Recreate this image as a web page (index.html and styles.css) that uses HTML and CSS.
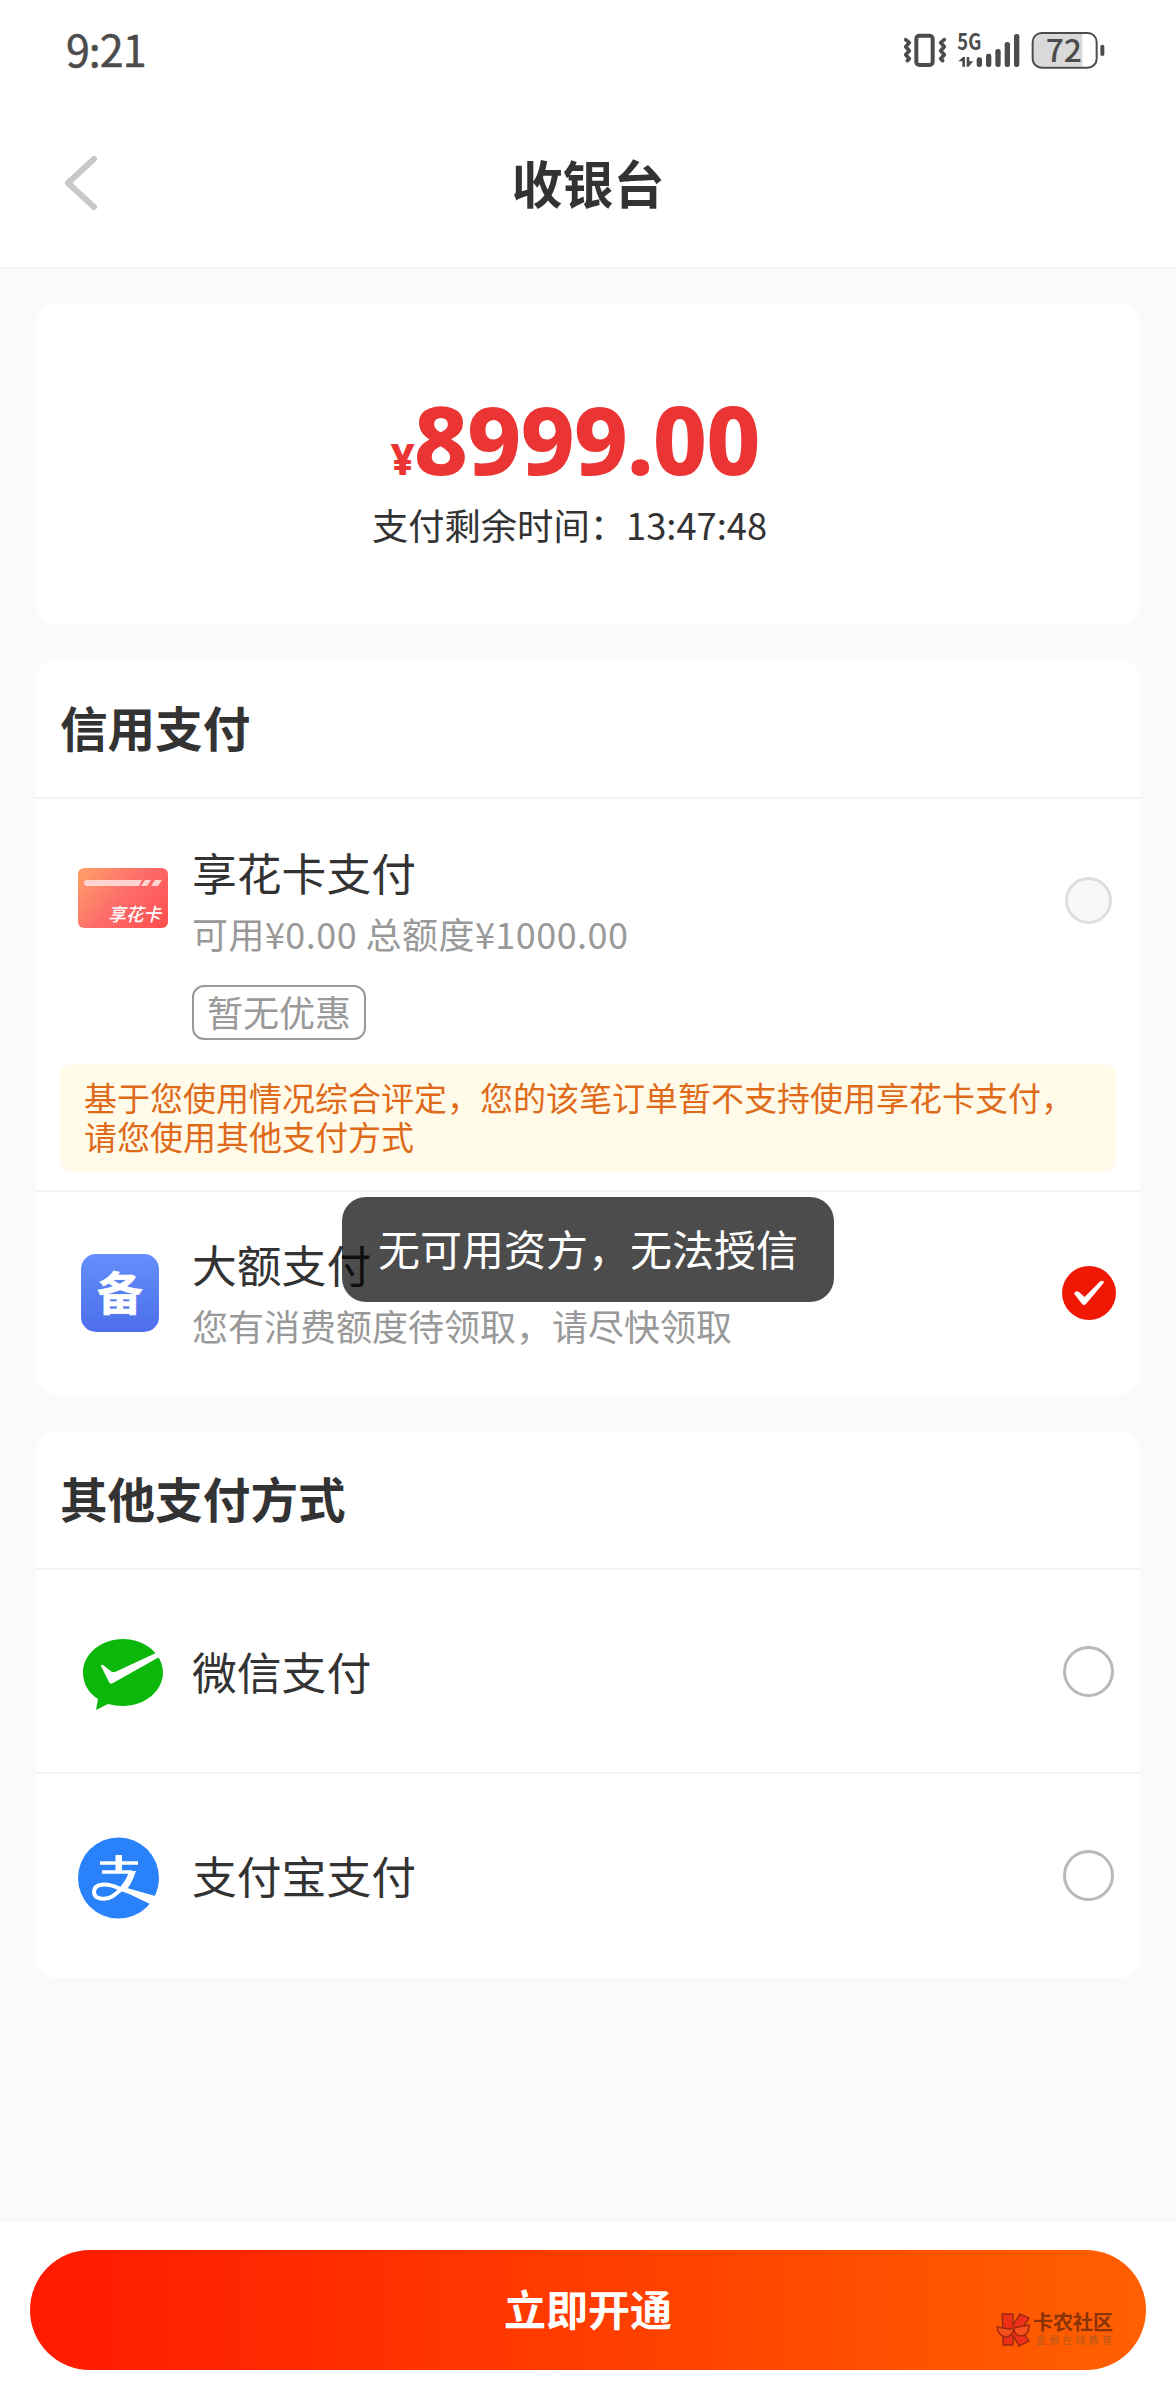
FILE: index.html
```html
<!DOCTYPE html>
<html lang="zh-CN">
<head>
<meta charset="utf-8">
<title>收银台</title>
<link rel="stylesheet" href="styles.css">
</head>
<body>
<div class="page">
  <header class="top">
    <div class="status">
      <span class="clock">9:21</span>
      <svg class="status-icons" viewBox="130 24 615 186" fill="#4c4c4c">
        <g fill="none" stroke="#4c4c4c">
          <rect x="170" y="74" width="49" height="88" rx="9" stroke-width="12"/>
          <path d="M138 86l11 9-11 12 11 12-11 12 11 12-6 6M254 86l-11 9 11 12-11 12 11 12-11 12 6 6" stroke-width="11" stroke-linecap="round" stroke-linejoin="round"/>
        </g>
        <text x="293" y="117" class="net" textLength="72" lengthAdjust="spacingAndGlyphs">5G</text>
        <path d="M296 151l14-13h6v29h-8v-16zM341 151l-14 16h-6v-29h8v13z"/>
        <rect x="351" y="139" width="16" height="29" rx="7"/>
        <rect x="379" y="128" width="16" height="40" rx="7"/>
        <rect x="407" y="114" width="16" height="54" rx="7"/>
        <rect x="435" y="93" width="16" height="75" rx="7"/>
        <rect x="463" y="69" width="16" height="99" rx="7"/>
        <path d="M544 69h124v98H544q-23 0-23-24V93q0-24 23-24z" fill="#d9d9d9"/>
        <rect x="519" y="66" width="192" height="104" rx="27" fill="none" stroke="#4c4c4c" stroke-width="6"/>
        <text x="558" y="153" class="pct" textLength="109" lengthAdjust="spacingAndGlyphs">72</text>
        <rect x="722" y="101" width="12" height="34" rx="6"/>
      </svg>
    </div>
    <div class="nav">
      <svg class="back" viewBox="0 0 34 56"><path d="M30 4L4 28l26 24" fill="none" stroke="#c8c8c8" stroke-width="6" stroke-linecap="round" stroke-linejoin="round"/></svg>
      <h1>收银台</h1>
    </div>
  </header>

  <main class="content">
    <section class="card summary">
      <p class="amount"><span class="yen">¥</span>8999.00</p>
      <p class="remain">支付剩余时间：13:47:48</p>
    </section>

    <section class="card">
      <h2>信用支付</h2>
      <div class="item item-flower">
        <div class="row">
          <svg class="icon" viewBox="0 0 100 100">
            <defs>
              <linearGradient id="coral" x1="0" y1="0.2" x2="1" y2="0.8"><stop offset="0" stop-color="#ff9a68"/><stop offset="0.5" stop-color="#fd6b6b"/><stop offset="1" stop-color="#fd5151"/></linearGradient>
            </defs>
            <rect x="6" y="20" width="90" height="60" rx="6" fill="url(#coral)"/>
            <path d="M15 32h55l-3 6H15a3 3 0 0 1 0-6zM73 32h6l-4 6h-6zM83 32h7l-4 6h-7z" fill="#ffd3cf"/>
            <text x="36" y="73" class="card-mark" textLength="53" lengthAdjust="spacingAndGlyphs">享花卡</text>
          </svg>
          <div class="info">
            <h3>享花卡支付</h3>
            <p class="sub quota">可用¥0.00 总额度¥1000.00</p>
            <span class="tag">暂无优惠</span>
          </div>
          <span class="radio disabled"></span>
        </div>
        <p class="notice">基于您使用情况综合评定，您的该笔订单暂不支持使用享花卡支付，请您使用其他支付方式</p>
      </div>
      <div class="item item-large">
        <div class="row">
          <svg class="icon" viewBox="0 0 100 100">
            <defs><linearGradient id="blue" x1="0" y1="0" x2="0" y2="1"><stop offset="0" stop-color="#648ffb"/><stop offset="1" stop-color="#4c6eea"/></linearGradient></defs>
            <rect x="9" y="11" width="78" height="78" rx="15" fill="url(#blue)"/>
            <text x="48" y="67" class="bei" text-anchor="middle">备</text>
          </svg>
          <div class="info">
            <h3>大额支付</h3>
            <p class="sub">您有消费额度待领取，请尽快领取</p>
          </div>
          <svg class="checked" viewBox="0 0 54 54"><circle cx="27" cy="27" r="27" fill="#f01704"/><path d="M12 27.500q2-3.500 5-1.500l5.500 5L38 15.500q3.500-2 4 1L24 38q-2 2-4 0z" fill="#fff"/></svg>
        </div>
      </div>
    </section>

    <section class="card wallets">
      <h2>其他支付方式</h2>
      <div class="item item-wallet">
        <div class="row">
          <svg class="icon" viewBox="0 0 100 100">
            <path d="M51 15c22 0 40 15 40 33.500S73 82 51 82q-8 0-15-2l-12 6 2-11C16 69 11 59 11 48.500 11 30 29 15 51 15z" fill="#0bb70b"/>
            <path d="M29 42q0-2 2-1l9 7 3 0L86 28l3 4-48 27q-3 2-4-1z" fill="#fff"/>
          </svg>
          <h3>微信支付</h3>
          <span class="radio"></span>
        </div>
      </div>
      <div class="item item-wallet">
        <div class="row">
          <svg class="icon" viewBox="0 0 100 100">
            <circle cx="46.500" cy="50" r="40.500" fill="#2a82fb"/>
            <path d="M28 35h38M30 44h30" fill="none" stroke="#fff" stroke-width="3.500"/>
            <path d="M43.500 27h6.500v17h-6.500z" fill="#fff"/>
            <path d="M60 43c-3 10-10 19-19 25-8 5-19 3-19-4 0-9 13-9 24-4l38 13" fill="none" stroke="#fff" stroke-width="4"/>
            <path d="M55 60l28 8-5 8-29-14z" fill="#fff"/>
            <path d="M57 43h7q-4 12-9 18l-6-3q6-7 8-15z" fill="#fff"/>
          </svg>
          <h3>支付宝支付</h3>
          <span class="radio"></span>
        </div>
      </div>
    </section>
  </main>

  <footer class="bar">
    <div class="submit">立即开通</div>
  </footer>

  <div class="toast">无可用资方，无法授信</div>

  <svg class="watermark" viewBox="0 -6 120 50">
    <g stroke="#a02a10" stroke-width="1.500" fill="#ee2f1a">
      <path d="M6 2h11v11L24 2l9 4-8 12 8 11-10 5-6-11v10H7V17z"/>
      <path d="M1 15l12 2 5-1 4-1 11-2q0 11-8 11-6 0-7-7-2 8-9 8-7-2-8-10z" fill="#f5501e"/>
    </g>
    <text x="37" y="18" class="wm-name" textLength="80" lengthAdjust="spacingAndGlyphs">卡农社区</text>
    <text x="40" y="32" class="wm-sub" textLength="76">金融在线教育</text>
  </svg>
</div>
</body>
</html>
```
FILE: styles.css
```css
* { box-sizing: border-box; margin: 0; padding: 0; }

body {
  font-family: "Noto Sans CJK SC", "Noto Sans", sans-serif;
  color: #333;
  background: #fafafa;
}

.page {
  position: relative;
  display: flex;
  flex-direction: column;
  width: 1176px;
  height: 2400px;
  overflow: hidden;
}

h1, h2, h3, p { white-space: nowrap; }

/* status bar and navigation */
.top { height: 268px; background: #fff; border-bottom: 1px solid #f2f2f2; }
.status {
  display: flex;
  justify-content: space-between;
  align-items: center;
  height: 99px;
  padding: 0 68px 0 66px;
}
.clock { font-size: 43px; font-weight: 400; color: #4c4c4c; line-height: 60px; letter-spacing: -1px; padding-bottom: 3px; -webkit-text-stroke: 0.5px #4c4c4c; }
.status-icons { width: 205px; height: 62px; overflow: visible; }
.net { font: 700 66px "Noto Sans CJK SC", sans-serif; }
.pct { font: 500 93px "Noto Sans CJK SC", sans-serif; }

.nav {
  display: grid;
  grid-template-columns: 1fr auto 1fr;
  align-items: center;
  height: 168px;
  padding: 0 64px;
}
.back { width: 34px; height: 56px; }
h1 { font-size: 51px; line-height: 60px; font-weight: 700; padding-bottom: 3px; }

/* cards */
.content {
  flex: 1;
  display: flex;
  flex-direction: column;
  gap: 36px;
  padding: 35px 36px 0;
}
.card { background: #fff; border-radius: 20px; }
.summary { height: 321px; padding-top: 86px; text-align: center; }
.amount {
  font-family: "Noto Sans", sans-serif;
  font-size: 94px;
  line-height: 100px;
  font-weight: 800;
  letter-spacing: -1px;
  color: #eb3434;
  padding-right: 26px;
}
.yen { font-size: 42px; line-height: 1; }
.remain { margin-top: 10px; font-size: 36.300px; line-height: 50px; padding-right: 37px; }

h2 {
  height: 137px;
  padding-left: 24px;
  font-size: 47.600px;
  line-height: 133px;
  font-weight: 700;
}
.item { border-top: 2px solid #f3f3f3; }
.row { display: flex; align-items: center; padding: 0 24px 0 36px; }
.icon { flex: none; width: 100px; height: 100px; margin-right: 20px; overflow: visible; }
.info { flex: 1; }
h3 { flex: 1; font-size: 44.800px; line-height: 66px; font-weight: 400; padding-bottom: 4px; }
.sub { margin-top: -3px; padding-bottom: 3px; font-size: 36px; line-height: 54px; color: #999; }
.quota { letter-spacing: 0.450px; }
.tag {
  display: block;
  width: 174px;
  height: 55px;
  margin-top: 22px;
  border: 2px solid #999;
  border-radius: 12px;
  color: #999;
  font-size: 36px;
  line-height: 48px;
  text-align: center;
}

.item-flower { height: 393px; }
.item-flower .row { align-items: flex-start; padding-top: 40px; }
.item-flower .icon { margin-top: 9px; }
.item-flower .radio { margin-top: 38px; }
.item-large { height: 205px; }
.item-large .row { height: 201px; }
.item-wallet .row { height: 202px; }
.item-wallet .icon { margin-top: 5px; }
.item-wallet h3 { padding-bottom: 0; }
.wallets { padding-bottom: 2px; }

.notice {
  height: 108px;
  margin: 24px 24px 0;
  padding: 14px 24px;
  border-radius: 12px;
  background: #fffbe8;
  color: #de6a1a;
  font-size: 33px;
  line-height: 39px;
  white-space: normal;
}

.radio {
  flex: none;
  width: 51px;
  height: 51px;
  margin-right: 2px;
  border: 3px solid #b9b9b9;
  border-radius: 50%;
}
.radio.disabled { width: 47px; height: 47px; margin-right: 4px; background: #f7f8fa; border-color: #dcdee0; }
.checked { width: 54px; height: 54px; }

.card-mark { font: italic 500 18px "Noto Sans CJK SC", sans-serif; fill: #fff; }
.bei { font: 700 46px "Noto Sans CJK SC", sans-serif; fill: #fff; stroke: #fff; stroke-width: 0.500px; }

/* bottom action */
.bar { height: 180px; padding: 29px 30px 0; background: #fff; border-top: 1px solid #f5f5f5; }
.submit {
  height: 120px;
  border-radius: 60px;
  background: linear-gradient(90deg, #ff1a00, #ff6000);
  color: #fff;
  font-size: 42px;
  font-weight: 700;
  line-height: 116px;
  text-align: center;
}

.toast {
  position: absolute;
  left: 342px;
  top: 1197px;
  width: 492px;
  height: 105px;
  border-radius: 24px;
  background: rgba(0, 0, 0, 0.7);
  color: #fff;
  font-size: 42px;
  line-height: 102px;
  text-align: center;
  white-space: nowrap;
}

.watermark { position: absolute; left: 996px; top: 2306px; width: 120px; height: 50px; overflow: visible; }
.wm-name { font: 700 20px "Noto Sans CJK SC", sans-serif; fill: #8a3208; }
.wm-sub { font: 500 10px "Noto Sans CJK SC", sans-serif; fill: #c05a18; }
```
